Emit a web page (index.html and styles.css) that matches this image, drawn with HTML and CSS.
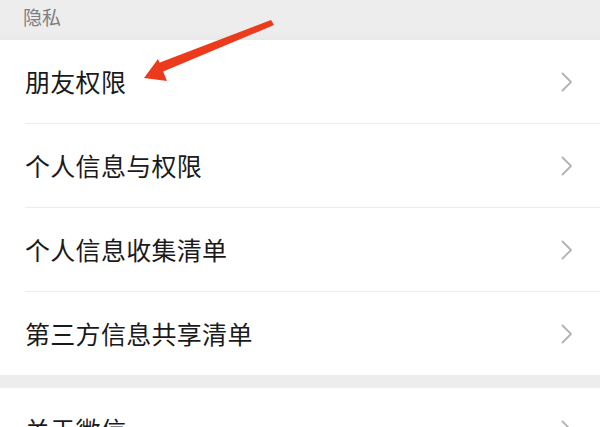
FILE: index.html
```html
<!DOCTYPE html>
<html lang="zh-CN">
<head>
<meta charset="utf-8">
<title>隐私设置</title>
<link rel="stylesheet" href="styles.css">
</head>
<body>
<div class="page">
  <div class="section-title">隐私</div>
  <div class="group">
    <div class="row"><span class="label">朋友权限</span><svg class="chev" viewBox="0 0 12 20"><path d="M1.5 1.5 L10 10 L1.5 18.5" /></svg></div>
    <div class="row"><span class="label">个人信息与权限</span><svg class="chev" viewBox="0 0 12 20"><path d="M1.5 1.5 L10 10 L1.5 18.5" /></svg></div>
    <div class="row"><span class="label">个人信息收集清单</span><svg class="chev" viewBox="0 0 12 20"><path d="M1.5 1.5 L10 10 L1.5 18.5" /></svg></div>
    <div class="row"><span class="label">第三方信息共享清单</span><svg class="chev" viewBox="0 0 12 20"><path d="M1.5 1.5 L10 10 L1.5 18.5" /></svg></div>
  </div>
  <div class="gap"></div>
  <div class="group">
    <div class="row"><span class="label">关于微信</span><svg class="chev" viewBox="0 0 12 20"><path d="M1.5 1.5 L10 10 L1.5 18.5" /></svg></div>
  </div>
  <svg class="arrow" viewBox="0 0 600 427" width="600" height="427">
    <polygon points="271,20 274,25 162,72 156,64" fill="#ec3a1d"/>
    <polygon points="144,78 158,59 167,81" fill="#ec3a1d"/>
  </svg>
</div>
</body>
</html>
```
FILE: styles.css
```css
html, body {
  margin: 0;
  padding: 0;
  background: #ffffff;
}
.page {
  position: relative;
  width: 600px;
  height: 427px;
  overflow: hidden;
  font-family: "Noto Sans CJK SC", "Noto Sans", sans-serif;
  background: #ededed;
}
.section-title {
  height: 40px;
  box-sizing: border-box;
  padding: 3px 0 0 23px;
  font-size: 19px;
  line-height: 28px;
  color: #808080;
  background: linear-gradient(#ededed 80%, #e9e9ec 100%);
}
.group {
  background: #ffffff;
  padding-left: 25px;
}
.row {
  height: 83px;
  display: flex;
  align-items: center;
  justify-content: space-between;
  padding-right: 27px;
  border-bottom: 1px solid #ececec;
}
.row:last-child {
  border-bottom: none;
}
.label {
  font-size: 25px;
  color: #1a1a1a;
  line-height: 1;
  letter-spacing: 0.3px;
}
.chev {
  width: 12px;
  height: 20px;
  fill: none;
  stroke: #b3b3b3;
  stroke-width: 1.8;
  stroke-linecap: round;
  stroke-linejoin: round;
}
.gap {
  height: 13px;
  background: #ededed;
}
.arrow {
  position: absolute;
  left: 0;
  top: 0;
  pointer-events: none;
}
```
